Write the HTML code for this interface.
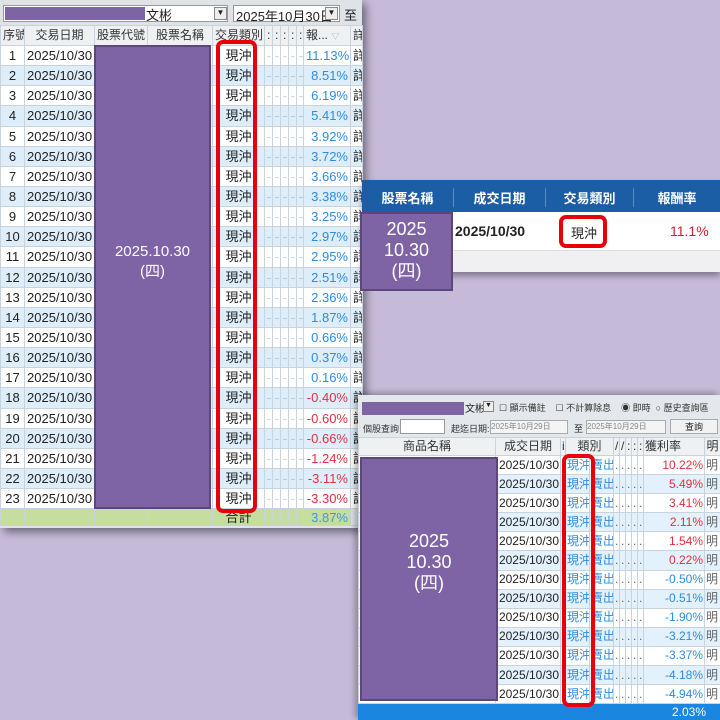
<!DOCTYPE html>
<html><head><meta charset="utf-8"><style>
*{margin:0;padding:0;box-sizing:border-box}
body{width:720px;height:720px;background:#c5bad8;position:relative;overflow:hidden;font-family:"Liberation Sans","Noto Sans CJK TC",sans-serif;color:#222}
.abs{position:absolute}
table{border-collapse:collapse;table-layout:fixed;position:absolute}
td{border:1px solid #c9d3dc;white-space:nowrap;overflow:hidden;font-size:13px;padding:0 2px;line-height:15px}
.L tr{height:20.15px}
.L td{background:#fff}
.L tr:nth-child(odd) td{background:#ddeefa}
.hd td{background:#eef0f2!important;color:#333;text-align:center;font-size:12px}
.c{text-align:center}.r{text-align:right}
.b{color:#2d8be0}.rd{color:#e03040}
.d{font-size:7px;color:#666}
.purple{background:#7e63a5;position:absolute;border:2px solid #5b477a}
.red{position:absolute;border:4px solid #e8000b;border-radius:7px}
.B tr{height:19.1px}
.B td{background:#fff;font-size:12px;line-height:13px;padding:0 1px}
.B tr:nth-child(odd) td{background:#e2f1fc}
</style></head><body>

<!-- LEFT WINDOW -->
<div class="abs" style="left:0;top:0;width:362px;height:528px;background:#dfe3e8;box-shadow:4px 4px 8px rgba(0,0,0,.45)"></div>
<div class="abs" style="left:3px;top:5px;width:225px;height:17px;background:#fff;border:1px solid #999"></div>
<div class="abs" style="left:5px;top:7px;width:140px;height:13px;background:#7e63a5"></div>
<div class="abs" style="left:146px;top:5px;font-size:13px">文彬</div>
<div class="abs" style="left:214px;top:7px;width:13px;height:13px;border:1px solid #888;background:#eee;font-size:8px;text-align:center">▼</div>
<div class="abs" style="left:233px;top:5px;width:107px;height:17px;background:#fff;border:1px solid #999;font-size:13px;padding-left:2px">2025年10月30日</div>
<div class="abs" style="left:325px;top:7px;width:13px;height:13px;border:1px solid #888;background:#eee;font-size:8px;text-align:center">▼</div>
<div class="abs" style="left:344px;top:5px;font-size:13px">至</div>
<table class="L" style="left:0;top:25px;width:362px">
<colgroup><col style="width:24px"><col style="width:70px"><col style="width:53px"><col style="width:65px"><col style="width:52px"><col style="width:8px"><col style="width:8px"><col style="width:8px"><col style="width:8px"><col style="width:7px"><col style="width:47px"><col style="width:12px"></colgroup>
<tr class="hd" style="height:20px"><td>序號</td><td>交易日期</td><td>股票代號</td><td>股票名稱</td><td>交易類別</td><td>:</td><td>:</td><td>:</td><td>:</td><td>:</td><td style="text-align:left">報... <span style="font-size:8px;color:#aaa">▽</span></td><td>詳</td></tr>
<tr><td class="c">1</td><td>2025/10/30</td><td></td><td></td><td class="c">現沖</td><td class="d">..</td><td class="d">..</td><td class="d">..</td><td class="d">..</td><td class="d">..</td><td class="r b">11.13%</td><td>詳</td></tr>
<tr><td class="c">2</td><td>2025/10/30</td><td></td><td></td><td class="c">現沖</td><td class="d">..</td><td class="d">..</td><td class="d">..</td><td class="d">..</td><td class="d">..</td><td class="r b">8.51%</td><td>詳</td></tr>
<tr><td class="c">3</td><td>2025/10/30</td><td></td><td></td><td class="c">現沖</td><td class="d">..</td><td class="d">..</td><td class="d">..</td><td class="d">..</td><td class="d">..</td><td class="r b">6.19%</td><td>詳</td></tr>
<tr><td class="c">4</td><td>2025/10/30</td><td></td><td></td><td class="c">現沖</td><td class="d">..</td><td class="d">..</td><td class="d">..</td><td class="d">..</td><td class="d">..</td><td class="r b">5.41%</td><td>詳</td></tr>
<tr><td class="c">5</td><td>2025/10/30</td><td></td><td></td><td class="c">現沖</td><td class="d">..</td><td class="d">..</td><td class="d">..</td><td class="d">..</td><td class="d">..</td><td class="r b">3.92%</td><td>詳</td></tr>
<tr><td class="c">6</td><td>2025/10/30</td><td></td><td></td><td class="c">現沖</td><td class="d">..</td><td class="d">..</td><td class="d">..</td><td class="d">..</td><td class="d">..</td><td class="r b">3.72%</td><td>詳</td></tr>
<tr><td class="c">7</td><td>2025/10/30</td><td></td><td></td><td class="c">現沖</td><td class="d">..</td><td class="d">..</td><td class="d">..</td><td class="d">..</td><td class="d">..</td><td class="r b">3.66%</td><td>詳</td></tr>
<tr><td class="c">8</td><td>2025/10/30</td><td></td><td></td><td class="c">現沖</td><td class="d">..</td><td class="d">..</td><td class="d">..</td><td class="d">..</td><td class="d">..</td><td class="r b">3.38%</td><td>詳</td></tr>
<tr><td class="c">9</td><td>2025/10/30</td><td></td><td></td><td class="c">現沖</td><td class="d">..</td><td class="d">..</td><td class="d">..</td><td class="d">..</td><td class="d">..</td><td class="r b">3.25%</td><td>詳</td></tr>
<tr><td class="c">10</td><td>2025/10/30</td><td></td><td></td><td class="c">現沖</td><td class="d">..</td><td class="d">..</td><td class="d">..</td><td class="d">..</td><td class="d">..</td><td class="r b">2.97%</td><td>詳</td></tr>
<tr><td class="c">11</td><td>2025/10/30</td><td></td><td></td><td class="c">現沖</td><td class="d">..</td><td class="d">..</td><td class="d">..</td><td class="d">..</td><td class="d">..</td><td class="r b">2.95%</td><td>詳</td></tr>
<tr><td class="c">12</td><td>2025/10/30</td><td></td><td></td><td class="c">現沖</td><td class="d">..</td><td class="d">..</td><td class="d">..</td><td class="d">..</td><td class="d">..</td><td class="r b">2.51%</td><td>詳</td></tr>
<tr><td class="c">13</td><td>2025/10/30</td><td></td><td></td><td class="c">現沖</td><td class="d">..</td><td class="d">..</td><td class="d">..</td><td class="d">..</td><td class="d">..</td><td class="r b">2.36%</td><td>詳</td></tr>
<tr><td class="c">14</td><td>2025/10/30</td><td></td><td></td><td class="c">現沖</td><td class="d">..</td><td class="d">..</td><td class="d">..</td><td class="d">..</td><td class="d">..</td><td class="r b">1.87%</td><td>詳</td></tr>
<tr><td class="c">15</td><td>2025/10/30</td><td></td><td></td><td class="c">現沖</td><td class="d">..</td><td class="d">..</td><td class="d">..</td><td class="d">..</td><td class="d">..</td><td class="r b">0.66%</td><td>詳</td></tr>
<tr><td class="c">16</td><td>2025/10/30</td><td></td><td></td><td class="c">現沖</td><td class="d">..</td><td class="d">..</td><td class="d">..</td><td class="d">..</td><td class="d">..</td><td class="r b">0.37%</td><td>詳</td></tr>
<tr><td class="c">17</td><td>2025/10/30</td><td></td><td></td><td class="c">現沖</td><td class="d">..</td><td class="d">..</td><td class="d">..</td><td class="d">..</td><td class="d">..</td><td class="r b">0.16%</td><td>詳</td></tr>
<tr><td class="c">18</td><td>2025/10/30</td><td></td><td></td><td class="c">現沖</td><td class="d">..</td><td class="d">..</td><td class="d">..</td><td class="d">..</td><td class="d">..</td><td class="r rd">-0.40%</td><td>詳</td></tr>
<tr><td class="c">19</td><td>2025/10/30</td><td></td><td></td><td class="c">現沖</td><td class="d">..</td><td class="d">..</td><td class="d">..</td><td class="d">..</td><td class="d">..</td><td class="r rd">-0.60%</td><td>詳</td></tr>
<tr><td class="c">20</td><td>2025/10/30</td><td></td><td></td><td class="c">現沖</td><td class="d">..</td><td class="d">..</td><td class="d">..</td><td class="d">..</td><td class="d">..</td><td class="r rd">-0.66%</td><td>詳</td></tr>
<tr><td class="c">21</td><td>2025/10/30</td><td></td><td></td><td class="c">現沖</td><td class="d">..</td><td class="d">..</td><td class="d">..</td><td class="d">..</td><td class="d">..</td><td class="r rd">-1.24%</td><td>詳</td></tr>
<tr><td class="c">22</td><td>2025/10/30</td><td></td><td></td><td class="c">現沖</td><td class="d">..</td><td class="d">..</td><td class="d">..</td><td class="d">..</td><td class="d">..</td><td class="r rd">-3.11%</td><td>詳</td></tr>
<tr><td class="c">23</td><td>2025/10/30</td><td></td><td></td><td class="c">現沖</td><td class="d">..</td><td class="d">..</td><td class="d">..</td><td class="d">..</td><td class="d">..</td><td class="r rd">-3.30%</td><td>詳</td></tr>
<tr style="height:17px"><td style="background:#c5dea0"></td><td style="background:#c5dea0"></td><td style="background:#c5dea0"></td><td style="background:#c5dea0"></td><td class="c" style="background:#c5dea0">合計</td><td style="background:#c5dea0"></td><td style="background:#c5dea0"></td><td style="background:#c5dea0"></td><td style="background:#c5dea0"></td><td style="background:#c5dea0"></td><td class="r" style="background:#c5dea0;color:#3a9ae0">3.87%</td><td style="background:#dfe3e8"></td></tr>
</table>
<div class="purple" style="left:94px;top:45px;width:117px;height:464px"></div>
<div class="abs" style="left:94px;top:242px;width:117px;text-align:center;color:#fff;font-size:15px;line-height:20px">2025.10.30<br>(四)</div>
<div class="red" style="left:216px;top:40px;width:41px;height:473px"></div>

<!-- RIGHT TOP PANEL -->
<div class="abs" style="left:362px;top:180px;width:358px;height:92px;background:#fff;box-shadow:0 4px 6px rgba(0,0,0,.35)"></div>
<div class="abs" style="left:362px;top:180px;width:358px;height:32px;background:#1b5ea6"></div>
<div class="abs" style="left:362px;top:250px;width:358px;height:22px;background:#f0f0f2;border-top:1px solid #ddd"></div>
<div class="abs" style="left:362px;top:188px;width:91px;text-align:center;color:#fff;font-size:13px;font-weight:bold">股票名稱</div>
<div class="abs" style="left:453px;top:188px;width:92px;text-align:center;color:#fff;font-size:13px;font-weight:bold;border-left:1px solid #5a8cc4">成交日期</div>
<div class="abs" style="left:545px;top:188px;width:88px;text-align:center;color:#fff;font-size:13px;font-weight:bold;border-left:1px solid #5a8cc4">交易類別</div>
<div class="abs" style="left:633px;top:188px;width:87px;text-align:center;color:#fff;font-size:13px;font-weight:bold;border-left:1px solid #5a8cc4">報酬率</div>
<div class="abs" style="left:455px;top:223px;font-size:14px;font-weight:bold;color:#222">2025/10/30</div>
<div class="abs" style="left:571px;top:223px;font-size:13px">現沖</div>
<div class="abs" style="left:670px;top:223px;font-size:14px;color:#d0202a">11.1%</div>
<div class="red" style="left:559px;top:215px;width:48px;height:33px"></div>
<div class="purple" style="left:360px;top:212px;width:93px;height:79px"></div>
<div class="abs" style="left:360px;top:219px;width:93px;text-align:center;color:#fff;font-size:18px;line-height:21px">2025<br>10.30<br>(四)</div>

<!-- BOTTOM WINDOW -->
<div class="abs" style="left:358px;top:395px;width:362px;height:325px;background:#e4e7eb;box-shadow:-3px -2px 6px rgba(0,0,0,.3)"></div>
<div class="abs" style="left:362px;top:402px;width:102px;height:13px;background:#7e63a5"></div>
<div class="abs" style="left:465px;top:400px;font-size:10px">文彬</div>
<div class="abs" style="left:483px;top:401px;width:11px;height:11px;border:1px solid #888;background:#eee;font-size:7px;text-align:center">▼</div>
<div class="abs" style="left:499px;top:401px;font-size:9px;color:#333">☐ 顯示備註 &nbsp;&nbsp;&nbsp;☐ 不計算除息 &nbsp;&nbsp;&nbsp;◉ 即時 &nbsp;○ 歷史查詢區</div>
<div class="abs" style="left:363px;top:422px;font-size:9px;color:#333">個股查詢</div>
<div class="abs" style="left:400px;top:419px;width:45px;height:15px;background:#fff;border:1px solid #999"></div>
<div class="abs" style="left:451px;top:422px;font-size:9px;color:#333">起迄日期:</div>
<div class="abs" style="left:490px;top:420px;width:78px;height:14px;background:#f4f4f4;border:1px solid #aaa;font-size:8px;color:#888">2025年10月29日</div>
<div class="abs" style="left:574px;top:422px;font-size:9px">至</div>
<div class="abs" style="left:586px;top:420px;width:80px;height:14px;background:#f4f4f4;border:1px solid #aaa;font-size:8px;color:#888">2025年10月29日</div>
<div class="abs" style="left:670px;top:419px;width:48px;height:15px;background:#f2f2f2;border:1px solid #aaa;font-size:9px;text-align:center">查詢</div>
<table class="B" style="left:358px;top:437px;width:362px">
<colgroup><col style="width:137px"><col style="width:65px"><col style="width:5px"><col style="width:24px"><col style="width:24px"><col style="width:6px"><col style="width:6px"><col style="width:6px"><col style="width:6px"><col style="width:6px"><col style="width:61px"><col style="width:16px"></colgroup>
<tr class="hd" style="height:18px"><td>商品名稱</td><td>成交日期</td><td>i</td><td colspan="2">類別</td><td>/</td><td>/</td><td>:</td><td>:</td><td>:</td><td style="text-align:left">獲利率</td><td>明</td></tr>
<tr><td></td><td class="r">2025/10/30</td><td></td><td class="b">現沖</td><td class="b">賣出</td><td class="d">..</td><td class="d">..</td><td class="d">..</td><td class="d">..</td><td class="d">..</td><td class="r rd">10.22%</td><td class="d">明</td></tr>
<tr><td></td><td class="r">2025/10/30</td><td></td><td class="b">現沖</td><td class="b">賣出</td><td class="d">..</td><td class="d">..</td><td class="d">..</td><td class="d">..</td><td class="d">..</td><td class="r rd">5.49%</td><td class="d">明</td></tr>
<tr><td></td><td class="r">2025/10/30</td><td></td><td class="b">現沖</td><td class="b">賣出</td><td class="d">..</td><td class="d">..</td><td class="d">..</td><td class="d">..</td><td class="d">..</td><td class="r rd">3.41%</td><td class="d">明</td></tr>
<tr><td></td><td class="r">2025/10/30</td><td></td><td class="b">現沖</td><td class="b">賣出</td><td class="d">..</td><td class="d">..</td><td class="d">..</td><td class="d">..</td><td class="d">..</td><td class="r rd">2.11%</td><td class="d">明</td></tr>
<tr><td></td><td class="r">2025/10/30</td><td></td><td class="b">現沖</td><td class="b">賣出</td><td class="d">..</td><td class="d">..</td><td class="d">..</td><td class="d">..</td><td class="d">..</td><td class="r rd">1.54%</td><td class="d">明</td></tr>
<tr><td></td><td class="r">2025/10/30</td><td></td><td class="b">現沖</td><td class="b">賣出</td><td class="d">..</td><td class="d">..</td><td class="d">..</td><td class="d">..</td><td class="d">..</td><td class="r rd">0.22%</td><td class="d">明</td></tr>
<tr><td></td><td class="r">2025/10/30</td><td></td><td class="b">現沖</td><td class="b">賣出</td><td class="d">..</td><td class="d">..</td><td class="d">..</td><td class="d">..</td><td class="d">..</td><td class="r b">-0.50%</td><td class="d">明</td></tr>
<tr><td></td><td class="r">2025/10/30</td><td></td><td class="b">現沖</td><td class="b">賣出</td><td class="d">..</td><td class="d">..</td><td class="d">..</td><td class="d">..</td><td class="d">..</td><td class="r b">-0.51%</td><td class="d">明</td></tr>
<tr><td></td><td class="r">2025/10/30</td><td></td><td class="b">現沖</td><td class="b">賣出</td><td class="d">..</td><td class="d">..</td><td class="d">..</td><td class="d">..</td><td class="d">..</td><td class="r b">-1.90%</td><td class="d">明</td></tr>
<tr><td></td><td class="r">2025/10/30</td><td></td><td class="b">現沖</td><td class="b">賣出</td><td class="d">..</td><td class="d">..</td><td class="d">..</td><td class="d">..</td><td class="d">..</td><td class="r b">-3.21%</td><td class="d">明</td></tr>
<tr><td></td><td class="r">2025/10/30</td><td></td><td class="b">現沖</td><td class="b">賣出</td><td class="d">..</td><td class="d">..</td><td class="d">..</td><td class="d">..</td><td class="d">..</td><td class="r b">-3.37%</td><td class="d">明</td></tr>
<tr><td></td><td class="r">2025/10/30</td><td></td><td class="b">現沖</td><td class="b">賣出</td><td class="d">..</td><td class="d">..</td><td class="d">..</td><td class="d">..</td><td class="d">..</td><td class="r b">-4.18%</td><td class="d">明</td></tr>
<tr><td></td><td class="r">2025/10/30</td><td></td><td class="b">現沖</td><td class="b">賣出</td><td class="d">..</td><td class="d">..</td><td class="d">..</td><td class="d">..</td><td class="d">..</td><td class="r b">-4.94%</td><td class="d">明</td></tr>
</table>
<div class="abs" style="left:358px;top:704px;width:362px;height:16px;background:#1a86e0"></div>
<div class="abs" style="left:672px;top:705px;font-size:12px;color:#fff">2.03%</div>
<div class="purple" style="left:360px;top:457px;width:138px;height:244px"></div>
<div class="abs" style="left:360px;top:531px;width:138px;text-align:center;color:#fff;font-size:18px;line-height:21px">2025<br>10.30<br>(四)</div>
<div class="red" style="left:562px;top:454px;width:33px;height:253px"></div>
</body></html>
